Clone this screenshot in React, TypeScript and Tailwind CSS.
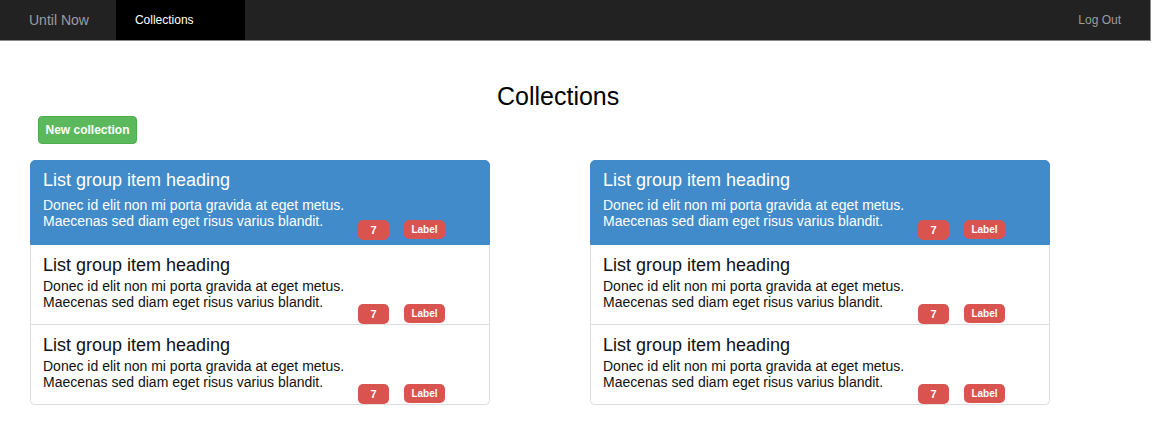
import React from "react";

const font = { fontFamily: '"Liberation Sans", Arial, Helvetica, sans-serif' };

function Badges({ className }: { className: string }) {
  return (
    <div className={`flex items-start gap-[15px] ${className}`}>
      <span className="flex h-[20px] w-[31px] items-center justify-center rounded-[5px] bg-[#d9534f] text-[11px] font-bold leading-none text-white">
        7
      </span>
      <span className="flex h-[19px] w-[41px] items-center justify-center rounded-[5px] bg-[#d9534f] text-[10px] font-bold leading-none text-white">
        Label
      </span>
    </div>
  );
}

function Item({ active, last }: { active?: boolean; last?: boolean }) {
  if (active) {
    return (
      <div className="rounded-t-[5px] border border-[#428bca] bg-[#428bca] pl-[12px] pt-[9px] pb-[4px] text-white">
        <div className="h-[20px] text-[18px] leading-[20px]">List group item heading</div>
        <div className="mt-[7px] flex items-start">
          <p className="w-[315px] text-[14px] leading-[16px]">
            Donec id elit non mi porta gravida at eget metus. Maecenas sed diam eget risus varius blandit.
          </p>
          <Badges className="mt-[23px]" />
        </div>
      </div>
    );
  }
  return (
    <div
      className={`border-x border-b border-[#dddddd] bg-white pl-[12px] pt-[10px] text-[#111] ${
        last ? "rounded-b-[5px]" : ""
      }`}
    >
      <div className="h-[20px] text-[18px] leading-[20px]">List group item heading</div>
      <div className="mt-[3px] flex items-start">
        <p className="w-[315px] text-[14px] leading-[16px]">
          Donec id elit non mi porta gravida at eget metus. Maecenas sed diam eget risus varius blandit.
        </p>
        <Badges className="mt-[26px]" />
      </div>
    </div>
  );
}

function Card() {
  return (
    <div className="flex w-[460px] flex-col">
      <Item active />
      <Item />
      <Item last />
    </div>
  );
}

export default function App() {
  return (
    <div className="h-[444px] w-[1168px] bg-white" style={font}>
      <nav className="flex h-[41px] w-[1151px] items-stretch border-r border-b border-[#8a8a8a] bg-[#222222]">
        <div className="flex items-center pl-[29px] pr-[27px] text-[14px] text-[#9d9d9d]">Until Now</div>
        <div className="flex w-[129px] items-center bg-black pl-[19px] text-[12px] text-white">Collections</div>
        <div className="flex-1" />
        <div className="flex items-center pr-[29px] text-[12px] text-[#9d9d9d]">Log Out</div>
      </nav>
      <div className="w-[1151px]">
        <h1 className="mt-[40px] ml-[497px] text-[25px] leading-[30px] text-black">Collections</h1>
        <div className="mt-[5px] pl-[38px]">
          <button className="h-[28px] w-[99px] rounded-[4px] border border-[#4cae4c] bg-[#5cb85c] text-[12px] font-bold text-white">
            New collection
          </button>
        </div>
        <div className="mt-[16px] flex gap-[100px] pl-[30px]">
          <Card />
          <Card />
        </div>
      </div>
    </div>
  );
}
